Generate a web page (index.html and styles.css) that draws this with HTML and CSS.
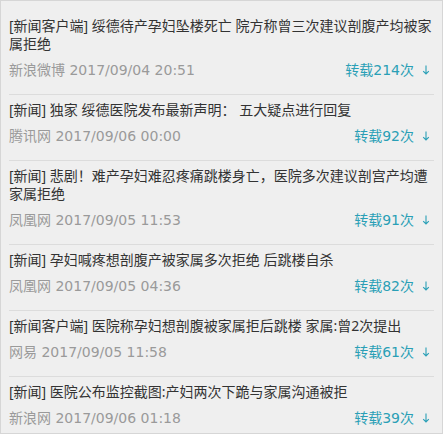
FILE: index.html
```html
<!DOCTYPE html>
<html lang="zh-CN">
<head>
  <meta charset="UTF-8">
  <title>转载列表</title>
  <link rel="stylesheet" href="styles.css">
</head>
<body>
  <div class="newsList">
    <div class="newsItem">
      <div class="newsTitle">[新闻客户端] 绥德待产孕妇坠楼死亡 院方称曾三次建议剖腹产均被家属拒绝</div>
      <div class="newsMeta">
        <span class="newsSource">新浪微博 2017/09/04 20:51</span>
        <span class="newsCount">转载214次 <svg class="arrow" viewBox="0 0 8 10" width="8" height="10"><path d="M4 0.5V9M1.2 6.2L4 9l2.8-2.8" fill="none" stroke="currentColor" stroke-width="1.1"/></svg></span>
      </div>
    </div>
    <div class="newsItem">
      <div class="newsTitle">[新闻] 独家 绥德医院发布最新声明： 五大疑点进行回复</div>
      <div class="newsMeta">
        <span class="newsSource">腾讯网 2017/09/06 00:00</span>
        <span class="newsCount">转载92次 <svg class="arrow" viewBox="0 0 8 10" width="8" height="10"><path d="M4 0.5V9M1.2 6.2L4 9l2.8-2.8" fill="none" stroke="currentColor" stroke-width="1.1"/></svg></span>
      </div>
    </div>
    <div class="newsItem">
      <div class="newsTitle">[新闻] 悲剧！难产孕妇难忍疼痛跳楼身亡，医院多次建议剖宫产均遭家属拒绝</div>
      <div class="newsMeta">
        <span class="newsSource">凤凰网 2017/09/05 11:53</span>
        <span class="newsCount">转载91次 <svg class="arrow" viewBox="0 0 8 10" width="8" height="10"><path d="M4 0.5V9M1.2 6.2L4 9l2.8-2.8" fill="none" stroke="currentColor" stroke-width="1.1"/></svg></span>
      </div>
    </div>
    <div class="newsItem">
      <div class="newsTitle">[新闻] 孕妇喊疼想剖腹产被家属多次拒绝 后跳楼自杀</div>
      <div class="newsMeta">
        <span class="newsSource">凤凰网 2017/09/05 04:36</span>
        <span class="newsCount">转载82次 <svg class="arrow" viewBox="0 0 8 10" width="8" height="10"><path d="M4 0.5V9M1.2 6.2L4 9l2.8-2.8" fill="none" stroke="currentColor" stroke-width="1.1"/></svg></span>
      </div>
    </div>
    <div class="newsItem">
      <div class="newsTitle">[新闻客户端] 医院称孕妇想剖腹被家属拒后跳楼 家属:曾2次提出</div>
      <div class="newsMeta">
        <span class="newsSource">网易 2017/09/05 11:58</span>
        <span class="newsCount">转载61次 <svg class="arrow" viewBox="0 0 8 10" width="8" height="10"><path d="M4 0.5V9M1.2 6.2L4 9l2.8-2.8" fill="none" stroke="currentColor" stroke-width="1.1"/></svg></span>
      </div>
    </div>
    <div class="newsItem">
      <div class="newsTitle">[新闻] 医院公布监控截图:产妇两次下跪与家属沟通被拒</div>
      <div class="newsMeta">
        <span class="newsSource">新浪网 2017/09/06 01:18</span>
        <span class="newsCount">转载39次 <svg class="arrow" viewBox="0 0 8 10" width="8" height="10"><path d="M4 0.5V9M1.2 6.2L4 9l2.8-2.8" fill="none" stroke="currentColor" stroke-width="1.1"/></svg></span>
      </div>
    </div>
  </div>
</body>
</html>
```

FILE: styles.css
```css
body {
    margin: 0;
    font-family: "DejaVu Sans", "Noto Sans CJK SC", sans-serif;
    font-size: 14px;
    background-color: #ffffff;
}

.newsList {
    width: 443px;
    height: 434px;
    box-sizing: border-box;
    overflow: hidden;
    padding: 10px 8px 0;
    background-color: #efefef;
    border: 1px solid #d6d6d6;
}

.newsItem {
    padding: 6px 0 15px;
    border-bottom: 1px solid #dcdcdc;
}

.newsItem:last-child {
    border-bottom: none;
}

/* titles use a narrower latin face so the first one keeps its break */
.newsTitle {
    font-family: "Noto Sans", "Noto Sans CJK SC", sans-serif;
    color: #333333;
    line-height: 18px;
}

.newsMeta {
    display: flex;
    justify-content: space-between;
    align-items: center;
    margin-top: 8px;
    line-height: 18px;
}

.newsSource {
    color: #9a9a9a;
}

.newsCount {
    color: #2a9fb6;
    display: flex;
    align-items: center;
    gap: 8px;
    padding-right: 4px;
}

.arrow {
    display: block;
}
```
